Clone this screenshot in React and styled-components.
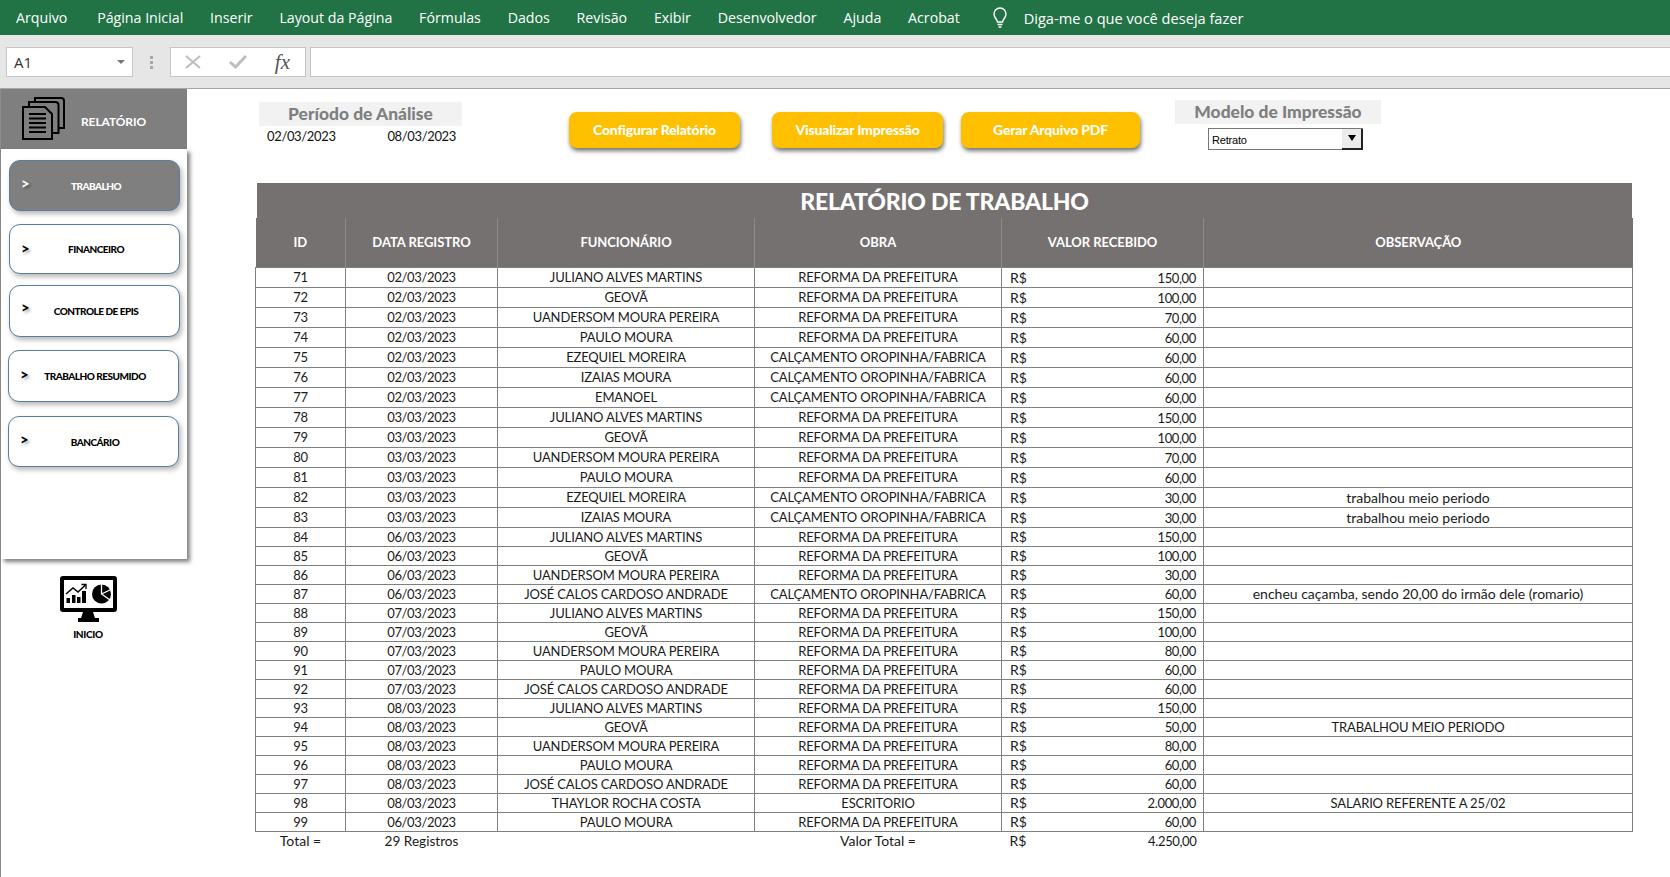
import React from 'react';
import styled, { createGlobalStyle } from 'styled-components';

const Global = createGlobalStyle`
    html, body {
        margin: 0;
        height: 877px;
        overflow: hidden;
        background: #fff;
    }
    * { box-sizing: border-box; }
`;

const Page = styled.div`
    width: 1670px;
    height: 877px;
    display: flex;
    flex-direction: column;
    font-family: Lato, "Liberation Sans", sans-serif;
`;

const Ribbon = styled.div`
    height: 35px;
    background: #217346;
    color: #fff;
    font-family: "Open Sans", "Noto Sans", sans-serif;
    font-size: 14.2px;
    display: flex;
    align-items: center;
    gap: 26.8px;
    padding-left: 16px;
    span:first-child { margin-right: 3px; }
`;

const Tell = styled.div`
    display: flex;
    align-items: center;
    gap: 17px;
    margin-left: 6px;
    font-size: 14.6px;
`;

const FormulaBar = styled.div`
    height: 54px;
    background: #e6e6e6;
    border-bottom: 1px solid #a6a6a6;
    display: flex;
    align-items: flex-start;
    padding: 12px 0 0 6px;
`;

const NameBox = styled.div`
    width: 127px;
    height: 30px;
    background: #fff;
    border: 1px solid #c6c6c6;
    display: flex;
    align-items: center;
    justify-content: space-between;
    padding: 0 7px;
    font-size: 15px;
    color: #333;
    font-family: "Open Sans", sans-serif;
`;

const Caret = styled.span`
    width: 0;
    height: 0;
    border-left: 4px solid transparent;
    border-right: 4px solid transparent;
    border-top: 4px solid #777;
`;

const Dots = styled.div`
    width: 37px;
    height: 30px;
    display: flex;
    flex-direction: column;
    align-items: center;
    justify-content: center;
    gap: 2px;
    span {
        width: 3px;
        height: 3px;
        background: #a8a8a8;
    }
`;

const FxBox = styled.div`
    width: 136px;
    height: 30px;
    background: #fff;
    border: 1px solid #c6c6c6;
    display: flex;
    align-items: center;
    justify-content: space-between;
    padding: 0 15px 0 14px;
`;

const Fx = styled.span`
    font-family: "Liberation Serif", serif;
    font-style: italic;
    font-size: 21px;
    line-height: 24px;
    color: #555;
`;

const FormulaInput = styled.div`
    flex: 1;
    height: 30px;
    margin-left: 4px;
    background: #fff;
    border: 1px solid #c6c6c6;
    border-right: 0;
`;

const Sheet = styled.div`
    flex: 1;
    display: flex;
    border-left: 1px solid #8c8c8c;
`;

const LeftColumn = styled.div`
    width: 254px;
    flex: none;
    display: flex;
    flex-direction: column;
`;

const SideHead = styled.div`
    width: 186px;
    height: 60px;
    background: #7f7f7f;
    display: flex;
    align-items: center;
    padding-left: 21px;
    gap: 15px;
    color: #fff;
    font-weight: 700;
    font-size: 12px;
    letter-spacing: -0.1px;
    span { padding-top: 5px; }
`;

const SidePanel = styled.div`
    width: 186px;
    height: 410px;
    background: #fff;
    box-shadow: 3px 3px 4px rgba(0, 0, 0, 0.5);
    display: flex;
    flex-direction: column;
    padding: 11px 0 0 8px;
`;

const NavButton = styled.div`
    width: 171px;
    height: ${({$h}) => $h}px;
    margin-bottom: ${({$mb}) => $mb}px;
    margin-left: ${({$shift}) => $shift || 0}px;
    flex: none;
    border: 1px solid #5a7d9f;
    border-radius: 11px;
    background: ${({$active}) => $active ? '#7f7f7f' : '#fff'};
    color: ${({$active}) => $active ? '#fff' : '#000'};
    box-shadow: 2px 3px 5px rgba(0, 0, 0, 0.28);
    display: flex;
    align-items: center;
    justify-content: center;
    position: relative;
    font-size: 10px;
    font-weight: 900;
    letter-spacing: -0.5px;
    padding-left: 3px;
`;

const Chevron = styled.span`
    position: absolute;
    left: 11px;
    top: ${({$top}) => $top}px;
    font-size: 15px;
    font-weight: 900;
    line-height: 18px;
    text-shadow: 2px 2px 3px rgba(0, 0, 0, 0.35);
`;

const HomeLink = styled.div`
    margin-top: 17px;
    width: 174px;
    display: flex;
    flex-direction: column;
    align-items: center;
    gap: 6px;
    font-size: 10px;
    font-weight: 900;
    letter-spacing: -0.3px;
`;

const Main = styled.div`
    flex: 1;
    display: flex;
    flex-direction: column;
    min-width: 0;
`;

const Toolbar = styled.div`
    height: 94px;
    display: flex;
    align-items: flex-start;
`;

const Period = styled.div`
    width: 203px;
    margin: 13px 0 0 4px;
`;

const BoxTitle = styled.div`
    height: 24px;
    background: #f2f2f2;
    color: #7f7f7f;
    font-weight: 900;
    font-size: 17.4px;
    line-height: 24px;
    text-align: center;
`;

const Dates = styled.div`
    display: flex;
    justify-content: space-between;
    padding: 1px 6px 0 8px;
    font-size: 13px;
    letter-spacing: -0.35px;
    line-height: 18px;
    color: #111;
`;

const ActionButton = styled.div`
    width: ${({$w}) => $w}px;
    height: 36px;
    margin: 23px 0 0 ${({$ml}) => $ml}px;
    padding-bottom: 1px;
    background: #ffc000;
    border-radius: 8px;
    box-shadow: 1px 3px 4px rgba(0, 0, 0, 0.55);
    color: #fff;
    font-weight: 900;
    font-size: 14px;
    letter-spacing: -0.2px;
    display: flex;
    align-items: center;
    justify-content: center;
`;

const Model = styled.div`
    width: 206px;
    margin: 11px 0 0 35px;
`;

const FakeSelect = styled.div`
    width: 155px;
    height: 22px;
    margin: 4px 0 0 33px;
    border: 1px solid #777;
    border-right: 0;
    display: flex;
    align-items: center;
    justify-content: space-between;
    font-family: "Liberation Sans", sans-serif;
    font-size: 11px;
    letter-spacing: -0.2px;
    padding: 1px 0 0 3px;
    background: #fff;
`;

const SelectArrow = styled.span`
    width: 21px;
    height: 21px;
    margin-top: -1px;
    background: #ececec;
    border-right: 2px solid #222;
    border-bottom: 2px solid #222;
    display: flex;
    align-items: center;
    justify-content: center;
    &::after {
        content: '';
        border-left: 4px solid transparent;
        border-right: 4px solid transparent;
        border-top: 6px solid #000;
    }
`;

const ReportTitle = styled.div`
    height: 35px;
    margin-left: 2px;
    width: 1375px;
    background: #767171;
    color: #fff;
    font-weight: 900;
    font-size: 23px;
    letter-spacing: -0.2px;
    line-height: 37px;
    text-align: center;
`;

const Table = styled.table`
    width: 1377px;
    table-layout: fixed;
    border-collapse: collapse;
    color: #1a1a1a;
`;

const HeadCell = styled.th`
    height: 49px;
    width: ${({$w}) => $w}px;
    padding: 0;
    background: #767171;
    color: #fff;
    font-size: 13px;
    font-weight: 700;
    letter-spacing: -0.05px;
    text-align: center;
    border-left: 1px solid #8f8b8b;
    &:first-child { border-left: 0; }
`;

const Row = styled.tr`
    height: ${({$tall}) => $tall ? 20 : 19}px;
`;

const typeFor = {
    num: 'font-size: 13px; letter-spacing: -0.35px;',
    name: 'font-size: 13px; letter-spacing: -0.15px;',
    note: 'font-size: 14px; letter-spacing: 0;',
};

const Cell = styled.td`
    padding: 1px 0 0;
    text-align: center;
    white-space: nowrap;
    line-height: 1;
    border: 1px solid #7f7f7f;
    ${({$type}) => typeFor[$type || 'name']}
`;

const Money = styled.div`
    display: flex;
    align-items: baseline;
    justify-content: space-between;
    padding: 0 7px 0 8px;
    font-size: 13px;
    letter-spacing: -0.35px;
    span:first-child { font-size: 14px; letter-spacing: 0; }
`;

const FootCell = styled.td`
    height: 20px;
    padding: 2px 0 0;
    vertical-align: top;
    text-align: center;
    line-height: 14px;
    white-space: nowrap;
    font-size: ${({$small}) => $small ? 13.6 : 14}px;
`;

const P = 'REFORMA DA PREFEITURA';
const C = 'CALÇAMENTO OROPINHA/FABRICA';
const JU = 'JULIANO ALVES MARTINS';
const GE = 'GEOVÃ';
const UA = 'UANDERSOM MOURA PEREIRA';
const PA = 'PAULO MOURA';
const EZ = 'EZEQUIEL MOREIRA';
const IZ = 'IZAIAS MOURA';
const JO = 'JOSÉ CALOS CARDOSO ANDRADE';
const MEIO = 'trabalhou meio periodo';

const rows = [
    ['02/03/2023', JU, P, '150,00'],
    ['02/03/2023', GE, P, '100,00'],
    ['02/03/2023', UA, P, '70,00'],
    ['02/03/2023', PA, P, '60,00'],
    ['02/03/2023', EZ, C, '60,00'],
    ['02/03/2023', IZ, C, '60,00'],
    ['02/03/2023', 'EMANOEL', C, '60,00'],
    ['03/03/2023', JU, P, '150,00'],
    ['03/03/2023', GE, P, '100,00'],
    ['03/03/2023', UA, P, '70,00'],
    ['03/03/2023', PA, P, '60,00'],
    ['03/03/2023', EZ, C, '30,00', MEIO],
    ['03/03/2023', IZ, C, '30,00', MEIO],
    ['06/03/2023', JU, P, '150,00'],
    ['06/03/2023', GE, P, '100,00'],
    ['06/03/2023', UA, P, '30,00'],
    ['06/03/2023', JO, C, '60,00', 'encheu caçamba, sendo 20,00 do irmão dele (romario)'],
    ['07/03/2023', JU, P, '150,00'],
    ['07/03/2023', GE, P, '100,00'],
    ['07/03/2023', UA, P, '80,00'],
    ['07/03/2023', PA, P, '60,00'],
    ['07/03/2023', JO, P, '60,00'],
    ['08/03/2023', JU, P, '150,00'],
    ['08/03/2023', GE, P, '50,00', 'TRABALHOU MEIO PERIODO'],
    ['08/03/2023', UA, P, '80,00'],
    ['08/03/2023', PA, P, '60,00'],
    ['08/03/2023', JO, P, '60,00'],
    ['08/03/2023', 'THAYLOR ROCHA COSTA', 'ESCRITORIO', '2.000,00', 'SALARIO REFERENTE A 25/02'],
    ['06/03/2023', PA, P, '60,00'],
];

const nav = [
    { label: 'TRABALHO', h: 51, mb: 13, top: 13, active: true },
    { label: 'FINANCEIRO', h: 50, mb: 11, top: 14 },
    { label: 'CONTROLE DE EPIS', h: 52, mb: 13, top: 12 },
    { label: 'TRABALHO RESUMIDO', h: 52, mb: 14, top: 14, shift: -1 },
    { label: 'BANCÁRIO', h: 51, mb: 0, top: 13, shift: -1 },
];

function BulbIcon() {
    return (
        <svg width="14" height="21" viewBox="0 0 14 21" fill="none" stroke="#fff" strokeWidth="1.4">
            <path d="M4.5 15C4.5 12.5 1 11 1 7A6 6 0 0 1 13 7C13 11 9.5 12.5 9.5 15Z" />
            <path d="M4.5 17.5H9.5M5.5 20H8.5" />
        </svg>
    );
}

function CancelIcon() {
    return (
        <svg width="16" height="14" viewBox="0 0 16 14" fill="none" stroke="#bdbdbd" strokeWidth="2">
            <path d="M1 1L15 13M15 1L1 13" />
        </svg>
    );
}

function EnterIcon() {
    return (
        <svg width="18" height="14" viewBox="0 0 18 14" fill="none" stroke="#bdbdbd" strokeWidth="3">
            <path d="M1 7L6.5 12L17 1" />
        </svg>
    );
}

function DocsIcon() {
    return (
        <svg width="44" height="44" viewBox="0 0 44 44">
            <g fill="#7f7f7f" stroke="#000" strokeWidth="2">
                <path d="M13 1H39Q42 1 42 4V31H13Z" />
                <path d="M7 5H33Q36.5 5 36.5 8V36H7Z" />
                <path d="M1 10H23L30 17V42H1Z" />
            </g>
            <path d="M7 17H24M7 21.5H24M7 26H24M7 30.5H24M7 35H24" stroke="#000" strokeWidth="2" />
        </svg>
    );
}

function MonitorIcon() {
    return (
        <svg width="57" height="46" viewBox="0 0 57 46">
            <rect x="2" y="2" width="53" height="32" rx="1" fill="#fff" stroke="#000" strokeWidth="4" />
            <path d="M23 36H33L35 42H39V46H18V42H21Z" fill="#000" />
            <path d="M6.5 27V22H10V27ZM12 27V19H15.5V27ZM17 27V21H20.5V27ZM22 27V15H26V27Z" fill="#000" />
            <path d="M6 18L13 12L18 16L25.5 9" fill="none" stroke="#000" strokeWidth="1.5" />
            <path d="M21.5 8.5H26V13" fill="none" stroke="#000" strokeWidth="1.3" />
            <circle cx="41.5" cy="18" r="9.5" fill="#000" />
            <path d="M41.5 7V18L50 24M41.5 18L52 13" fill="none" stroke="#fff" strokeWidth="1.3" />
        </svg>
    );
}

export default function App() {
    return (
        <Page>
            <Global />
            <Ribbon>
                <span>Arquivo</span>
                <span>Página Inicial</span>
                <span>Inserir</span>
                <span>Layout da Página</span>
                <span>Fórmulas</span>
                <span>Dados</span>
                <span>Revisão</span>
                <span>Exibir</span>
                <span>Desenvolvedor</span>
                <span>Ajuda</span>
                <span>Acrobat</span>
                <Tell>
                    <BulbIcon />
                    <span>Diga-me o que você deseja fazer</span>
                </Tell>
            </Ribbon>
            <FormulaBar>
                <NameBox>A1<Caret /></NameBox>
                <Dots><span /><span /><span /></Dots>
                <FxBox>
                    <CancelIcon />
                    <EnterIcon />
                    <Fx>fx</Fx>
                </FxBox>
                <FormulaInput />
            </FormulaBar>
            <Sheet>
                <LeftColumn>
                    <SideHead><DocsIcon /><span>RELATÓRIO</span></SideHead>
                    <SidePanel>
                        {nav.map(n => (
                            <NavButton key={n.label} $h={n.h} $mb={n.mb} $shift={n.shift} $active={n.active}>
                                <Chevron $top={n.top}>&gt;</Chevron>
                                {n.label}
                            </NavButton>
                        ))}
                    </SidePanel>
                    <HomeLink><MonitorIcon />INICIO</HomeLink>
                </LeftColumn>
                <Main>
                    <Toolbar>
                        <Period>
                            <BoxTitle>Período de Análise</BoxTitle>
                            <Dates><span>02/03/2023</span><span>08/03/2023</span></Dates>
                        </Period>
                        <ActionButton $w={171} $ml={107}>Configurar Relatório</ActionButton>
                        <ActionButton $w={171} $ml={32}>Visualizar Impressão</ActionButton>
                        <ActionButton $w={179} $ml={18}>Gerar Arquivo PDF</ActionButton>
                        <Model>
                            <BoxTitle>Modelo de Impressão</BoxTitle>
                            <FakeSelect>Retrato<SelectArrow /></FakeSelect>
                        </Model>
                    </Toolbar>
                    <ReportTitle>RELATÓRIO DE TRABALHO</ReportTitle>
                    <Table>
                        <thead>
                            <tr>
                                <HeadCell $w={90}>ID</HeadCell>
                                <HeadCell $w={152}>DATA REGISTRO</HeadCell>
                                <HeadCell $w={257}>FUNCIONÁRIO</HeadCell>
                                <HeadCell $w={247}>OBRA</HeadCell>
                                <HeadCell $w={202}>VALOR RECEBIDO</HeadCell>
                                <HeadCell $w={429}>OBSERVAÇÃO</HeadCell>
                            </tr>
                        </thead>
                        <tbody>
                            {rows.map((r, i) => (
                                <Row key={i} $tall={i < 13}>
                                    <Cell $type="num">{71 + i}</Cell>
                                    <Cell $type="num">{r[0]}</Cell>
                                    <Cell>{r[1]}</Cell>
                                    <Cell>{r[2]}</Cell>
                                    <Cell><Money><span>R$</span><span>{r[3]}</span></Money></Cell>
                                    <Cell $type={r[4] && r[4] !== r[4].toUpperCase() ? 'note' : 'name'}>{r[4]}</Cell>
                                </Row>
                            ))}
                            <tr>
                                <FootCell>Total =</FootCell>
                                <FootCell $small>29 Registros</FootCell>
                                <FootCell />
                                <FootCell>Valor Total =</FootCell>
                                <FootCell><Money><span>R$</span><span>4.250,00</span></Money></FootCell>
                                <FootCell />
                            </tr>
                        </tbody>
                    </Table>
                </Main>
            </Sheet>
        </Page>
    );
}
